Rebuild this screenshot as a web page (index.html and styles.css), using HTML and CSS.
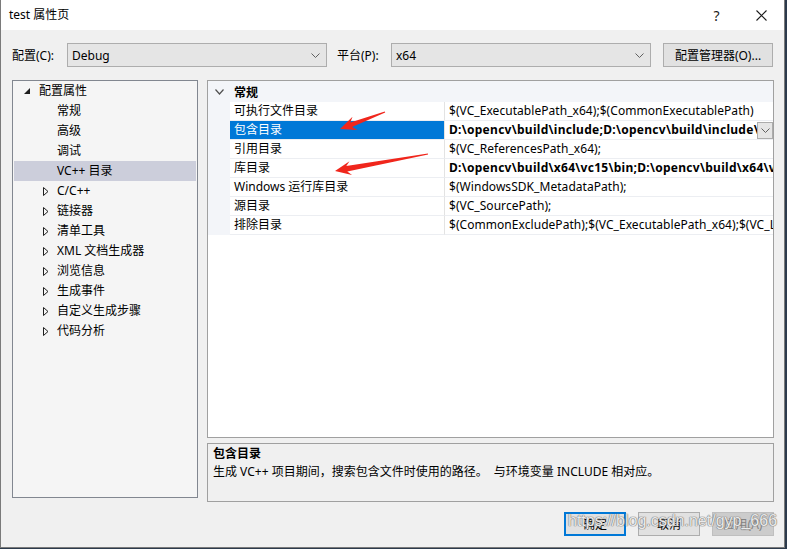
FILE: index.html
```html
<!DOCTYPE html>
<html lang="zh-CN">
<head>
    <meta charset="UTF-8">
    <meta name="viewport" content="width=device-width, initial-scale=1.0">
    <title>test 属性页</title>
    <link rel="stylesheet" href="styles.css">
</head>
<body>

    <div class="window">
        <header class="titlebar">
            <span class="title">test 属性页</span>
            <span class="help">?</span>
            <span class="close">
                <svg width="11" height="11" viewBox="0 0 11 11"><path d="M0.5 0.5 L10.5 10.5 M10.5 0.5 L0.5 10.5" stroke="#1a1a1a" stroke-width="1.1" fill="none"/></svg>
            </span>
        </header>

        <section class="toolbar">
            <span class="field-label">配置(C):</span>
            <div class="combo">
                <span>Debug</span>
                <svg class="chev" width="9" height="5" viewBox="0 0 9 5"><polyline points="0.5,0.5 4.5,4.5 8.5,0.5" stroke="#606060" fill="none"/></svg>
            </div>
            <span class="field-label platform-label">平台(P):</span>
            <div class="combo">
                <span>x64</span>
                <svg class="chev" width="9" height="5" viewBox="0 0 9 5"><polyline points="0.5,0.5 4.5,4.5 8.5,0.5" stroke="#606060" fill="none"/></svg>
            </div>
            <button class="btn btn-manager">配置管理器(O)...</button>
        </section>

        <section class="main">
            <!-- left: settings tree -->
            <ul class="tree">
                <li class="node root">
                    <svg class="exp" width="6" height="6" viewBox="0 0 6 6"><polygon points="6,0 6,6 0,6" fill="#1e1e1e"/></svg>
                    配置属性
                </li>
                <li class="node leaf">常规</li>
                <li class="node leaf">高级</li>
                <li class="node leaf">调试</li>
                <li class="node leaf selected">VC++ 目录</li>
                <li class="node folder"><svg class="col" width="6" height="9" viewBox="0 0 6 9"><polygon points="0.5,0.5 5,4.5 0.5,8.5" fill="none" stroke="#1e1e1e"/></svg>C/C++</li>
                <li class="node folder"><svg class="col" width="6" height="9" viewBox="0 0 6 9"><polygon points="0.5,0.5 5,4.5 0.5,8.5" fill="none" stroke="#1e1e1e"/></svg>链接器</li>
                <li class="node folder"><svg class="col" width="6" height="9" viewBox="0 0 6 9"><polygon points="0.5,0.5 5,4.5 0.5,8.5" fill="none" stroke="#1e1e1e"/></svg>清单工具</li>
                <li class="node folder"><svg class="col" width="6" height="9" viewBox="0 0 6 9"><polygon points="0.5,0.5 5,4.5 0.5,8.5" fill="none" stroke="#1e1e1e"/></svg>XML 文档生成器</li>
                <li class="node folder"><svg class="col" width="6" height="9" viewBox="0 0 6 9"><polygon points="0.5,0.5 5,4.5 0.5,8.5" fill="none" stroke="#1e1e1e"/></svg>浏览信息</li>
                <li class="node folder"><svg class="col" width="6" height="9" viewBox="0 0 6 9"><polygon points="0.5,0.5 5,4.5 0.5,8.5" fill="none" stroke="#1e1e1e"/></svg>生成事件</li>
                <li class="node folder"><svg class="col" width="6" height="9" viewBox="0 0 6 9"><polygon points="0.5,0.5 5,4.5 0.5,8.5" fill="none" stroke="#1e1e1e"/></svg>自定义生成步骤</li>
                <li class="node folder"><svg class="col" width="6" height="9" viewBox="0 0 6 9"><polygon points="0.5,0.5 5,4.5 0.5,8.5" fill="none" stroke="#1e1e1e"/></svg>代码分析</li>
            </ul>

            <!-- right: property grid + description -->
            <div class="right">
                <div class="grid">
                    <div class="category">
                        <span class="cat-toggle">
                            <svg width="9" height="6" viewBox="0 0 9 6"><polyline points="0.5,0.5 4.5,5 8.5,0.5" stroke="#505050" stroke-width="1.2" fill="none"/></svg>
                        </span>
                        <span class="cat-name">常规</span>
                    </div>
                    <div class="prop">
                        <span class="gutter"></span>
                        <span class="name">可执行文件目录</span>
                        <span class="value">$(VC_ExecutablePath_x64);$(CommonExecutablePath)</span>
                    </div>
                    <div class="prop active">
                        <span class="gutter"></span>
                        <span class="name">包含目录</span>
                        <span class="value bold">
                            <span class="value-text">D:\opencv\build\include;D:\opencv\build\include\opencv2</span>
                            <span class="drop">
                                <svg width="9" height="5" viewBox="0 0 9 5"><polyline points="0.5,0.5 4.5,4.5 8.5,0.5" stroke="#606060" fill="none"/></svg>
                            </span>
                        </span>
                    </div>
                    <div class="prop">
                        <span class="gutter"></span>
                        <span class="name">引用目录</span>
                        <span class="value">$(VC_ReferencesPath_x64);</span>
                    </div>
                    <div class="prop">
                        <span class="gutter"></span>
                        <span class="name">库目录</span>
                        <span class="value bold">D:\opencv\build\x64\vc15\bin;D:\opencv\build\x64\vc15\lib</span>
                    </div>
                    <div class="prop">
                        <span class="gutter"></span>
                        <span class="name">Windows 运行库目录</span>
                        <span class="value">$(WindowsSDK_MetadataPath);</span>
                    </div>
                    <div class="prop">
                        <span class="gutter"></span>
                        <span class="name">源目录</span>
                        <span class="value">$(VC_SourcePath);</span>
                    </div>
                    <div class="prop">
                        <span class="gutter"></span>
                        <span class="name">排除目录</span>
                        <span class="value">$(CommonExcludePath);$(VC_ExecutablePath_x64);$(VC_LibraryPath_x64)</span>
                    </div>
                </div>

                <div class="desc">
                    <h4>包含目录</h4>
                    <p>生成 VC++ 项目期间，搜索包含文件时使用的路径。&nbsp; 与环境变量 INCLUDE 相对应。</p>
                </div>
            </div>
        </section>

        <footer class="footer">
            <button class="btn btn-ok">确定</button>
            <button class="btn">取消</button>
            <button class="btn btn-disabled">应用(A)</button>
        </footer>

        <!-- red markers drawn on top of the grid -->
        <svg class="arrows" width="785" height="548" viewBox="0 0 785 548">
            <polygon fill="#f0261c" points="340,129 357.4,129.9 352.1,127.1 385.2,112.5 384.8,111.5 350.3,122.4 352.5,116.8"/>
            <polygon fill="#f0261c" points="335,171 352,175 347.3,171.6 428.1,154.5 427.9,153.5 346.3,166 349.5,161.2"/>
        </svg>

        <div class="watermark">https://blog.csdn.net/gyp_666</div>
    </div>

</body>
</html>
```

FILE: styles.css
```css
/* Reset default styles */
* {
    margin: 0;
    padding: 0;
    box-sizing: border-box;
}

body {
    font-family: "Noto Sans", "Noto Sans CJK SC", sans-serif;
    font-size: 12px;
    color: #000;
    background-color: #2c3a4c;
    width: 787px;
    height: 549px;
    overflow: hidden;
}

.window {
    position: relative;
    width: 785px;
    height: 548px;
    background-color: #f0f0f0;
    border: 1px solid #7a7a7a;
    border-top: none;
}

/* title bar */
.titlebar {
    display: flex;
    align-items: center;
    height: 30px;
    background-color: #fff;
}

.title {
    padding-left: 8px;
    flex: 1;
    line-height: 18px;
}

.help {
    font-size: 14px;
    width: 46px;
    text-align: center;
    color: #1a1a1a;
    padding-left: 3px;
}

.close {
    display: flex;
    justify-content: center;
    align-items: center;
    width: 46px;
    height: 30px;
}

/* configuration row */
.toolbar {
    display: flex;
    align-items: center;
    margin-top: 13px;
    padding-left: 11px;
    height: 24px;
}

.field-label {
    width: 55px;
}

.platform-label {
    margin-left: 10px;
    width: 54px;
}

.combo {
    display: flex;
    align-items: center;
    justify-content: space-between;
    width: 260px;
    height: 24px;
    padding: 0 5px 0 4px;
    background-color: #e5e5e5;
    border: 1px solid #adadad;
}

.chev {
    margin-right: 1px;
}

.btn {
    font-family: inherit;
    font-size: 12px;
    color: #000;
    height: 24px;
    background-color: #e1e1e1;
    border: 1px solid #adadad;
}

.btn-manager {
    width: 110px;
    margin-left: 12px;
}

/* main area */
.main {
    display: flex;
    gap: 9px;
    margin-top: 13px;
    padding-left: 11px;
}

.tree {
    list-style: none;
    width: 186px;
    height: 418px;
    background-color: #f5f5f5;
    border: 1px solid #828790;
    padding: 0 1px;
}

.node {
    display: flex;
    align-items: center;
    height: 20px;
    line-height: 20px;
    white-space: nowrap;
}

.root {
    padding-left: 10px;
}

.root .exp {
    margin-right: 9px;
    margin-top: -1px;
}

.leaf {
    padding-left: 43px;
}

.folder {
    padding-left: 29px;
}

.folder .col {
    margin-right: 8px;
}

.selected {
    background-color: #cccedb;
}

.right {
    display: flex;
    flex-direction: column;
    width: 567px;
}

/* property grid */
.grid {
    height: 358px;
    background-color: #fff;
    border: 1px solid #a0a0a0;
}

.category {
    display: flex;
    align-items: center;
    height: 21px;
    background-color: #f3f5f9;
}

.cat-toggle {
    display: flex;
    justify-content: center;
    width: 22px;
}

.cat-name {
    font-weight: bold;
    padding-left: 4px;
}

.prop {
    display: grid;
    grid-template-columns: 22px 215px 1fr;
    height: 19px;
    line-height: 18px;
}

.gutter {
    background-color: #f3f5f9;
}

.name,
.value {
    border-bottom: 1px solid #eceef2;
    white-space: nowrap;
    overflow: hidden;
}

.name {
    padding-left: 4px;
    border-right: 1px solid #e3e3e3;
}

.value {
    padding-left: 4px;
    letter-spacing: 0.05px;
}

.bold {
    font-weight: bold;
    letter-spacing: 0.28px;
}

.active .name {
    background-color: #0078d7;
    color: #fff;
}

.active .value {
    display: flex;
    align-items: center;
}

.value-text {
    flex: 1;
    overflow: hidden;
}

.drop {
    display: flex;
    align-items: center;
    justify-content: center;
    flex: none;
    width: 16px;
    height: 17px;
    background-color: #e5e5e5;
    border: 1px solid #acacac;
}

/* description box */
.desc {
    margin-top: 5px;
    height: 59px;
    border: 1px solid #a0a0a0;
    padding: 1px 5px;
    line-height: 18px;
}

.desc h4 {
    font-size: 12px;
}

/* bottom buttons */
.footer {
    display: flex;
    justify-content: flex-end;
    gap: 12px;
    margin-top: 10px;
    padding-right: 10px;
}

.footer .btn {
    width: 62px;
}

.btn-ok {
    border: 2px solid #0078d7;
}

.btn-disabled {
    background-color: #cccccc;
    border-color: #bfbfbf;
    color: #838383;
}

.arrows {
    position: absolute;
    left: -1px;
    top: 0;
    pointer-events: none;
}

.watermark {
    position: absolute;
    left: 567px;
    top: 512px;
    font-family: "Liberation Sans", Arial, sans-serif;
    font-size: 16px;
    color: rgba(255, 255, 255, 0.85);
    text-shadow: 0 0 1px #7a7a7a, 0 0 1px #7a7a7a, 0 0 1px #7a7a7a;
    pointer-events: none;
}
```
